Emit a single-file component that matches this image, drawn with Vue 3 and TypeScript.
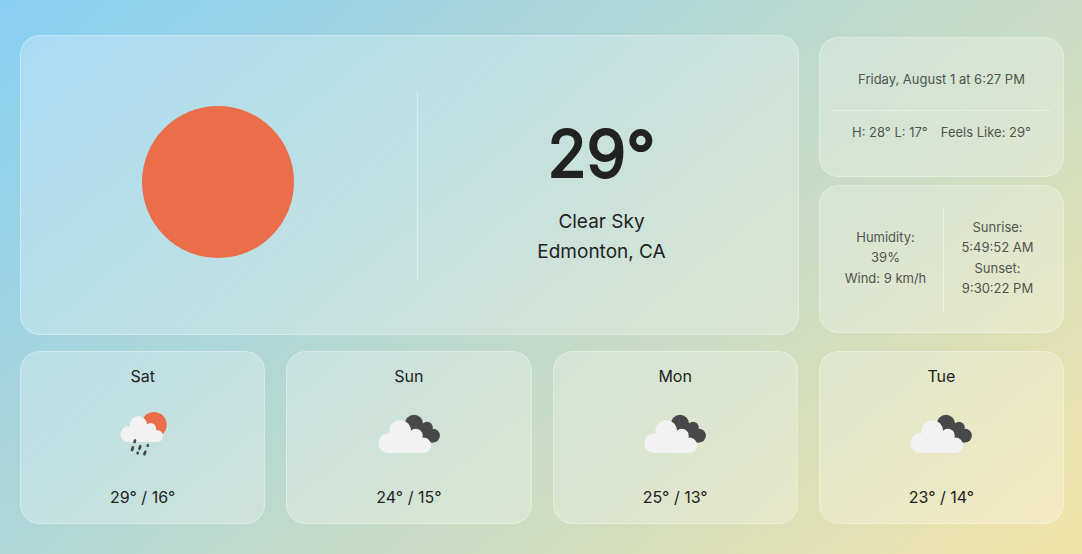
<script setup lang="ts">
interface ForecastDay {
  name: string
  icon: 'rain' | 'clouds'
  high: number
  low: number
}

const days: ForecastDay[] = [
  { name: 'Sat', icon: 'rain', high: 29, low: 16 },
  { name: 'Sun', icon: 'clouds', high: 24, low: 15 },
  { name: 'Mon', icon: 'clouds', high: 25, low: 13 },
  { name: 'Tue', icon: 'clouds', high: 23, low: 14 },
]
</script>

<template>
  <main class="page">
    <div class="top">
      <section class="card current">
        <div class="current-icon">
          <svg class="sun" viewBox="0 0 154 154" role="img" aria-label="Clear sky">
            <circle cx="77" cy="77" r="76" fill="#eb6e4b" />
          </svg>
        </div>
        <div class="current-divider"></div>
        <div class="current-text">
          <h1 class="temp">29°</h1>
          <p class="place">Clear Sky</p>
          <p class="place">Edmonton, CA</p>
        </div>
      </section>

      <div class="side">
        <section class="card summary">
          <p class="date">Friday, August 1 at 6:27 PM</p>
          <div class="range">
            <span>H: 28° L: 17°</span>
            <span>Feels Like: 29°</span>
          </div>
        </section>
        <section class="card details">
          <div class="detail">
            <p>Humidity:<br />39%</p>
            <p>Wind: 9 km/h</p>
          </div>
          <div class="detail sun-times">
            <p>Sunrise:<br />5:49:52 AM</p>
            <p>Sunset:<br />9:30:22 PM</p>
          </div>
        </section>
      </div>
    </div>

    <div class="forecast">
      <section v-for="day in days" :key="day.name" class="card day">
        <h2 class="day-name">{{ day.name }}</h2>
        <svg v-if="day.icon === 'rain'" class="day-icon" viewBox="0 0 100 70" aria-hidden="true">
          <circle cx="61" cy="24.7" r="12.7" fill="#eb6e4b" />
          <g fill="#f2f2f2">
            <circle cx="35.2" cy="34.3" r="7.7" />
            <circle cx="45.4" cy="24.8" r="8.7" />
            <circle cx="57.6" cy="28.6" r="5.6" />
            <circle cx="64" cy="36" r="6" />
            <path d="M35 42V27L45 22L58 27L64 33V42Z" />
          </g>
          <g stroke="#48484a" stroke-width="2.7" stroke-linecap="round">
            <path d="M42 40.6L41.6 42" />
            <path d="M39.9 47.4L39 50" />
            <path d="M47.3 46.2L46.4 48.8" />
            <path d="M54.9 45.2L54.7 45.7" />
            <path d="M44.8 52.8L44.6 53.3" />
            <path d="M52.3 51.8L51.4 54.2" />
          </g>
        </svg>
        <svg v-else class="day-icon" viewBox="-1 0 100 70" aria-hidden="true">
          <g fill="#48484a">
            <circle cx="54" cy="24" r="9.2" />
            <circle cx="67" cy="27.6" r="5.8" />
            <circle cx="73.1" cy="35.6" r="6.8" />
            <path d="M54 20L68 25L73 30V42.4H54Z" />
          </g>
          <g fill="#f2f2f2">
            <circle cx="28.1" cy="43.1" r="9.8" />
            <circle cx="40.2" cy="31" r="10.8" />
            <circle cx="55.8" cy="35.7" r="7" />
            <circle cx="63.4" cy="45.2" r="7.7" />
            <path d="M28 52.9V34L40 28L56 33L63 40V52.9Z" />
          </g>
        </svg>
        <p class="day-temp">{{ day.high }}° / {{ day.low }}°</p>
      </section>
    </div>
  </main>
</template>

<style>
body {
  margin: 0;
}
</style>

<style scoped>
.page {
  box-sizing: border-box;
  min-height: 100vh;
  padding: 35px 18px 30px 20px;
  display: flex;
  flex-direction: column;
  gap: 16px;
  background: linear-gradient(140deg, #87cff3, #f2e4a8);
  color: #222;
  font-family: Inter, "Liberation Sans", sans-serif;
  font-size: 16px;
  line-height: 24px;
}

h1,
h2,
p {
  margin: 0;
  font-weight: 400;
}

.card {
  box-sizing: border-box;
  border: 1px solid rgba(255, 255, 255, 0.3);
  border-radius: 20px;
  background: rgba(255, 255, 255, 0.25);
}

.top {
  display: grid;
  grid-template-columns: minmax(0, 779fr) minmax(0, 245fr);
  gap: 20px;
  align-items: center;
}

.current {
  min-height: 300px;
  padding-right: 13px;
  display: grid;
  grid-template-columns: minmax(0, 396fr) 1px minmax(0, 367fr);
  align-items: center;
}

.current-icon {
  display: flex;
  justify-content: center;
  padding-right: 2px;
}

.sun {
  width: 154px;
  height: 154px;
  margin-bottom: 6px;
}

.current-divider {
  height: 188px;
  background: rgba(255, 255, 255, 0.4);
}

.current-text {
  padding-top: 11px;
  text-align: center;
}

.temp {
  margin-bottom: 13px;
  font-size: 64px;
  line-height: 80px;
  -webkit-text-stroke: 2px currentColor;
}

.place {
  font-size: 19px;
  line-height: 30px;
}

.side {
  display: flex;
  flex-direction: column;
  gap: 8px;
  color: #505550;
  font-size: 13px;
  line-height: 20px;
  text-align: center;
}

.summary {
  min-height: 140px;
  padding: 0 12px;
}

.date {
  padding: 31px 0 21px;
  border-bottom: 1px solid rgba(255, 255, 255, 0.4);
}

.range {
  display: flex;
  justify-content: center;
  gap: 13px;
  padding-top: 11px;
}

.details {
  min-height: 148px;
  padding: 20px 12px;
  display: grid;
  grid-template-columns: minmax(0, 111fr) minmax(0, 108fr);
}

.detail {
  display: flex;
  flex-direction: column;
  justify-content: center;
  gap: 1px;
  padding: 0 4px 4px 0;
}

.sun-times {
  padding-right: 0;
  border-left: 1px solid rgba(255, 255, 255, 0.4);
}

.forecast {
  display: grid;
  grid-template-columns: repeat(4, minmax(0, 1fr));
  gap: 21px;
}

.day {
  min-height: 173px;
  padding: 12px 12px 14px;
  display: flex;
  flex-direction: column;
  align-items: center;
  justify-content: space-between;
}

.day-name {
  font-size: 16px;
}

.day-icon {
  width: 100px;
  height: 70px;
  margin-bottom: 4px;
}
</style>
